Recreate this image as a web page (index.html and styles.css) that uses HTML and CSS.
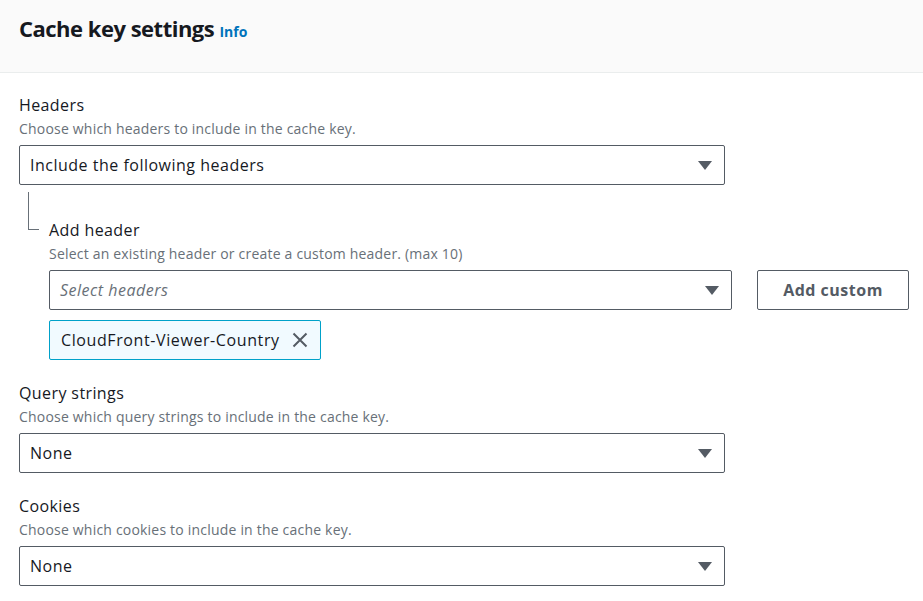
FILE: index.html
```html
<!DOCTYPE html>
<html lang="en">

<head>
    <meta charset="UTF-8">
    <meta name="viewport" content="width=device-width, initial-scale=1.0">
    <title>Cache key settings</title>
    <link rel="stylesheet" href="styles.css">
</head>

<body>

    <div class="panel">
        <div class="panel-header">
            <h2 class="title">Cache key settings <a class="info" href="#">Info</a></h2>
        </div>

        <div class="panel-body">

            <!-- Headers -->
            <div class="field">
                <div class="label">Headers</div>
                <div class="desc">Choose which headers to include in the cache key.</div>
                <div class="select">
                    <span class="value">Include the following headers</span>
                    <svg class="caret" width="14" height="9" viewBox="0 0 14 9"><path d="M0 0h14L7 9z" fill="#545b64"/></svg>
                </div>

                <div class="sub">
                    <div class="connector"></div>
                    <div class="sub-body">
                        <div class="label">Add header</div>
                        <div class="desc">Select an existing header or create a custom header. (max 10)</div>
                        <div class="select-row">
                            <div class="select">
                                <span class="placeholder">Select headers</span>
                                <svg class="caret" width="14" height="9" viewBox="0 0 14 9"><path d="M0 0h14L7 9z" fill="#545b64"/></svg>
                            </div>
                            <button class="btn">Add custom</button>
                        </div>
                        <div class="token">
                            <span>CloudFront-Viewer-Country</span>
                            <svg class="dismiss" width="16" height="16" viewBox="0 0 16 16"><path d="M1.5 1.5l13 13M14.5 1.5l-13 13" stroke="#545b64" stroke-width="2" fill="none"/></svg>
                        </div>
                    </div>
                </div>
            </div>

            <!-- Query strings -->
            <div class="field">
                <div class="label">Query strings</div>
                <div class="desc">Choose which query strings to include in the cache key.</div>
                <div class="select">
                    <span class="value">None</span>
                    <svg class="caret" width="14" height="9" viewBox="0 0 14 9"><path d="M0 0h14L7 9z" fill="#545b64"/></svg>
                </div>
            </div>

            <!-- Cookies -->
            <div class="field">
                <div class="label">Cookies</div>
                <div class="desc">Choose which cookies to include in the cache key.</div>
                <div class="select">
                    <span class="value">None</span>
                    <svg class="caret" width="14" height="9" viewBox="0 0 14 9"><path d="M0 0h14L7 9z" fill="#545b64"/></svg>
                </div>
            </div>

        </div>
    </div>

</body>

</html>
```

FILE: styles.css
```css
* {
    margin: 0px;
    padding: 0px;
    box-sizing: border-box;
}

body {
    font-family: "Open Sans", "Noto Sans", sans-serif;
    color: #16191f;
    background: #fff;
}

.panel-header {
    height: 73px;
    background-color: #fafafa;
    border-bottom: 1px solid #eaeded;
    padding: 13px 19px 0;
}

.title {
    font-size: 22px;
    line-height: 30px;
    font-weight: 700;
    letter-spacing: -0.5px;
}

.title .info {
    font-size: 14px;
    font-weight: 700;
    color: #0073bb;
    text-decoration: none;
    letter-spacing: 0;
}

.panel-body {
    padding: 21px 14px 0 19px;
}

.field {
    margin-bottom: 22px;
}

.label {
    font-size: 16px;
    line-height: 22px;
    letter-spacing: 0.4px;
}

.desc {
    margin-top: 3px;
    font-size: 14px;
    line-height: 20px;
    letter-spacing: 0.2px;
    color: #687078;
}

.select {
    display: flex;
    align-items: center;
    justify-content: space-between;
    max-width: 706px;
    height: 40px;
    margin-top: 6px;
    padding: 0 12px 0 10px;
    border: 1px solid #545b64;
    border-radius: 2px;
    font-size: 16px;
    letter-spacing: 0.5px;
}

.select .placeholder {
    font-style: italic;
    color: #687078;
}

/* tree connector */
.sub {
    display: flex;
}

.connector {
    flex: 0 0 auto;
    width: 11px;
    height: 38px;
    margin: 7px 10px 0 9px;
    border-left: 1px solid #687078;
    border-bottom: 1px solid #687078;
}

.sub-body {
    flex: 1;
    padding-top: 34px;
}

.select-row {
    display: flex;
    gap: 25px;
}

.select-row .select {
    flex: 1;
    max-width: none;
}

.btn {
    flex: 0 0 152px;
    height: 40px;
    margin-top: 6px;
    background: #fff;
    border: 1px solid #545b64;
    border-radius: 2px;
    font-family: inherit;
    font-size: 16px;
    font-weight: 700;
    letter-spacing: 0.5px;
    color: #545b64;
}

.token {
    display: inline-flex;
    align-items: center;
    gap: 12px;
    height: 40px;
    margin-top: 10px;
    padding: 0 12px 0 11px;
    background-color: #f1faff;
    border: 1px solid #00a1c9;
    border-radius: 2px;
    font-size: 16px;
    letter-spacing: 0.6px;
}
```
